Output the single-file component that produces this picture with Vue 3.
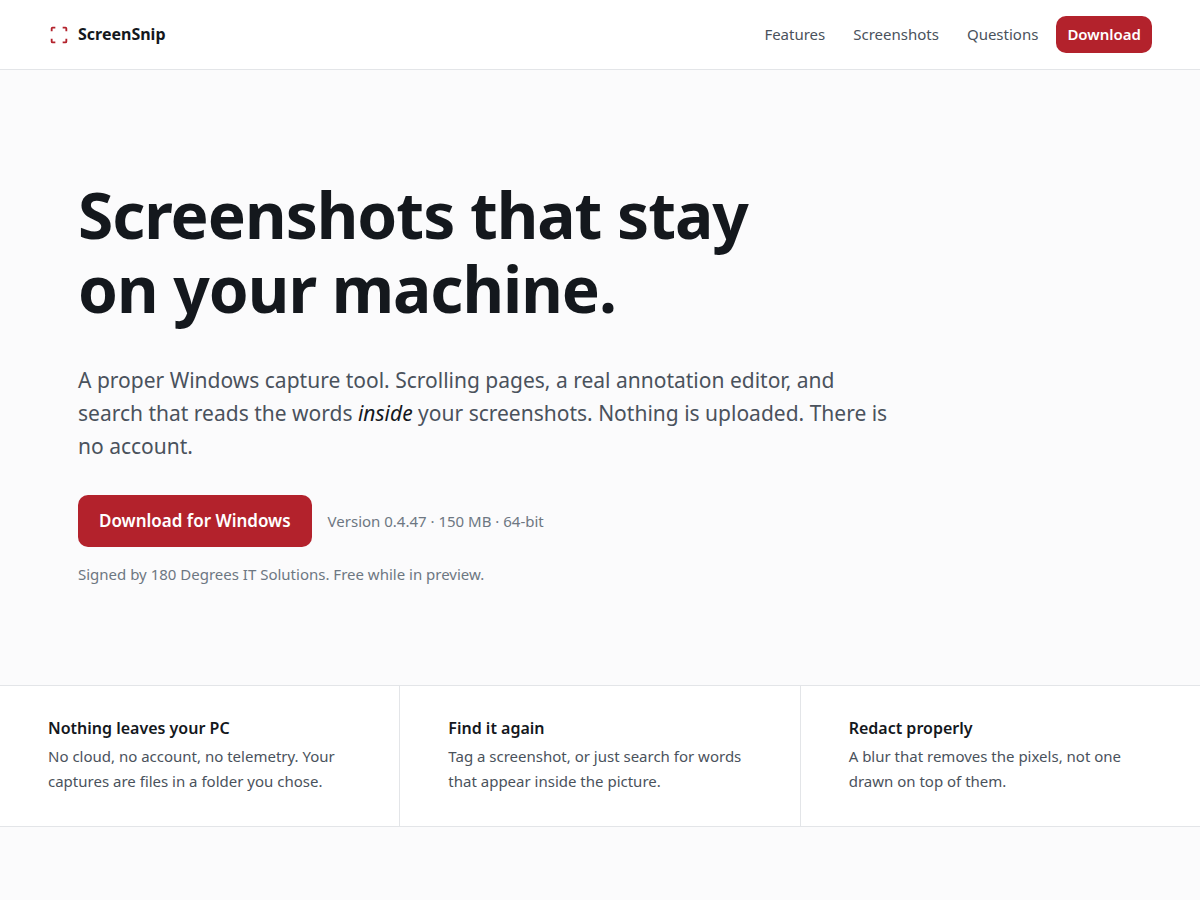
<script setup>
const links = [
  { label: 'Features', href: '#features' },
  { label: 'Screenshots', href: '#screenshots' },
  { label: 'Questions', href: '#questions' },
]
const points = [
  { title: 'Nothing leaves your PC', text: 'No cloud, no account, no telemetry. Your captures are files in a folder you chose.' },
  { title: 'Find it again', text: 'Tag a screenshot, or just search for words that appear inside the picture.' },
  { title: 'Redact properly', text: 'A blur that removes the pixels, not one drawn on top of them.' },
]
</script>

<template>
  <div class="page">
    <header class="bar">
      <a class="brand" href="#">
        <svg class="mark" viewBox="0 0 24 24" aria-hidden="true">
          <path d="M4 8V5a1 1 0 0 1 1-1h3M16 4h3a1 1 0 0 1 1 1v3M20 16v3a1 1 0 0 1-1 1h-3M8 20H5a1 1 0 0 1-1-1v-3" />
        </svg>
        <span>ScreenSnip</span>
      </a>
      <nav class="nav" aria-label="Main">
        <a v-for="link in links" :key="link.label" class="link" :href="link.href">{{ link.label }}</a>
        <a class="button small" href="#download">Download</a>
      </nav>
    </header>
    <main>
      <section class="hero">
        <h1>Screenshots that stay<br />on your machine.</h1>
        <p class="lead">
          A proper Windows capture tool. Scrolling pages, a real annotation editor, and search that
          reads the words <em>inside</em> your screenshots. Nothing is uploaded. There is no account.
        </p>
        <div class="actions">
          <a class="button large" href="#download">Download for Windows</a>
          <span class="note">Version 0.4.47 · 150 MB · 64-bit</span>
        </div>
        <p class="note">Signed by 180 Degrees IT Solutions. Free while in preview.</p>
      </section>
      <section id="features" class="points">
        <article v-for="point in points" :key="point.title" class="point">
          <h2>{{ point.title }}</h2>
          <p>{{ point.text }}</p>
        </article>
      </section>
    </main>
  </div>
</template>

<style>
body {
  background: #fbfbfc;
}
</style>

<style scoped>
.page {
  font-family: "Noto Sans", sans-serif;
  font-size: 16px;
  color: #14181d;
}
.page * {
  box-sizing: border-box;
}
a {
  text-decoration: none;
  color: inherit;
}
.bar {
  display: flex;
  align-items: center;
  justify-content: space-between;
  padding: 16px 48px;
  background: #fff;
  border-bottom: 1px solid #e3e5e8;
}
.brand {
  display: flex;
  align-items: center;
  gap: 8px;
  font-weight: 700;
  line-height: 23px;
}
.mark {
  width: 22px;
  height: 22px;
  fill: none;
  stroke: #b3222c;
  stroke-width: 2;
}
.nav {
  display: flex;
  align-items: center;
  gap: 28px;
  font-size: 15px;
  line-height: 23px;
}
.link {
  color: #4a525c;
}
.button {
  display: block;
  background: #b3222c;
  color: #fff;
  font-weight: 600;
  border-radius: 10px;
}
.small {
  margin-left: -10px;
  padding: 8px 11px;
  line-height: 21px;
}
.large {
  padding: 14px 21px;
  font-size: 17px;
  line-height: 24px;
}
.hero {
  padding: 108px 78px 99px;
}
h1 {
  margin: 0 0 38px;
  font-size: 64px;
  line-height: 74px;
  font-weight: 700;
  letter-spacing: -1px;
}
.lead {
  max-width: 820px;
  margin: 0 0 32px;
  font-size: 21px;
  line-height: 33px;
  color: #4a525c;
}
.lead em {
  color: #14181d;
}
.actions {
  display: flex;
  align-items: center;
  gap: 16px;
  margin-bottom: 16px;
}
.note {
  margin: 0;
  font-size: 15px;
  line-height: 23px;
  color: #6d7782;
}
.points {
  display: grid;
  grid-template-columns: repeat(3, 1fr);
  gap: 1px;
  background: #e3e5e8;
  border-top: 1px solid #e3e5e8;
  border-bottom: 1px solid #e3e5e8;
}
.point {
  padding: 28px 48px 32px;
  background: #fff;
}
h2 {
  margin: 0 0 2px;
  font-size: 16px;
  line-height: 28px;
  font-weight: 600;
}
.point p {
  margin: 0;
  font-size: 15px;
  line-height: 25px;
  color: #4a525c;
}
</style>
